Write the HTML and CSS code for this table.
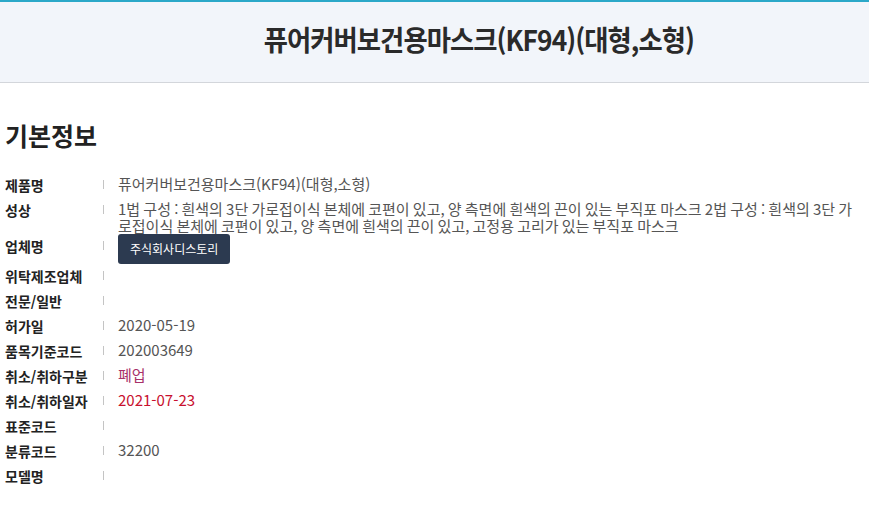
FILE: index.html
```html
<!DOCTYPE html>
<html lang="ko">
<head>
  <meta charset="UTF-8">
  <meta name="viewport" content="width=device-width, initial-scale=1.0">
  <title>퓨어커버보건용마스크(KF94)(대형,소형)</title>
  <link rel="stylesheet" href="styles.css">
</head>
<body>

  <!-- 제품 제목 -->
  <div class="title-bar">
    <h1>퓨어커버보건용마스크(KF94)(대형,소형)</h1>
  </div>

  <!-- 기본정보 -->
  <div class="info-section">
    <h2>기본정보</h2>

    <div class="info-list">
      <div class="info-row">
        <div class="label">제품명</div>
        <span class="sep"></span>
        <div class="value">퓨어커버보건용마스크(KF94)(대형,소형)</div>
      </div>
      <div class="info-row">
        <div class="label">성상</div>
        <span class="sep"></span>
        <div class="value">1법 구성 : 흰색의 3단 가로접이식 본체에 코편이 있고, 양 측면에 흰색의 끈이 있는 부직포 마스크 2법 구성 : 흰색의 3단 가로접이식 본체에 코편이 있고, 양 측면에 흰색의 끈이 있고, 고정용 고리가 있는 부직포 마스크</div>
      </div>
      <div class="info-row company-row">
        <div class="label">업체명</div>
        <span class="sep"></span>
        <div class="value"><span class="company-badge">주식회사디스토리</span></div>
      </div>
      <div class="info-row">
        <div class="label">위탁제조업체</div>
        <span class="sep"></span>
        <div class="value"></div>
      </div>
      <div class="info-row">
        <div class="label">전문/일반</div>
        <span class="sep"></span>
        <div class="value"></div>
      </div>
      <div class="info-row">
        <div class="label">허가일</div>
        <span class="sep"></span>
        <div class="value">2020-05-19</div>
      </div>
      <div class="info-row">
        <div class="label">품목기준코드</div>
        <span class="sep"></span>
        <div class="value">202003649</div>
      </div>
      <div class="info-row">
        <div class="label">취소/취하구분</div>
        <span class="sep"></span>
        <div class="value status-closed">폐업</div>
      </div>
      <div class="info-row">
        <div class="label">취소/취하일자</div>
        <span class="sep"></span>
        <div class="value status-date">2021-07-23</div>
      </div>
      <div class="info-row">
        <div class="label">표준코드</div>
        <span class="sep"></span>
        <div class="value"></div>
      </div>
      <div class="info-row">
        <div class="label">분류코드</div>
        <span class="sep"></span>
        <div class="value">32200</div>
      </div>
      <div class="info-row">
        <div class="label">모델명</div>
        <span class="sep"></span>
        <div class="value"></div>
      </div>
    </div>
  </div>

</body>
</html>
```

FILE: styles.css
```css
/* ===== General ===== */
body {
  font-family: 'Noto Sans CJK KR', 'Noto Sans', sans-serif;
  margin: 0;
  padding: 0;
  background-color: #ffffff;
  color: #222;
}

/* ===== Title Bar ===== */
.title-bar {
  background-color: #f2f5fa;
  border-top: 2px solid #2ba8c8;
  border-bottom: 1px solid #d3d6db;
  height: 80px;
  display: flex;
  align-items: center;
  justify-content: center;
  padding-left: 88px;
}

.title-bar h1 {
  display: inline-block;
  margin: 0 0 7px;
  font-size: 28px;
  font-weight: 700;
  letter-spacing: -1px;
  color: #2a2a2a;
  transform: scaleX(0.94);
}

/* ===== Basic Info ===== */
.info-section {
  padding: 0 5px;
}

.info-section h2 {
  margin: 30px 0 0;
  font-size: 25px;
  font-weight: 700;
  line-height: 44px;
  color: #222;
}

.info-list {
  margin-top: 16px;
}

.info-row {
  display: flex;
  min-height: 25px;
}

.info-row .label {
  width: 98px;
  flex-shrink: 0;
  font-size: 14px;
  font-weight: 700;
  line-height: 25px;
  color: #222;
}

.info-row .sep {
  width: 1px;
  height: 9px;
  margin-top: 7px;
  background-color: #c4c4c4;
  flex-shrink: 0;
}

.info-row .value {
  flex: 1;
  margin-left: 14px;
  padding-top: 2px;
  font-size: 15px;
  line-height: 17px;
  word-spacing: -1px;
  color: #555;
  padding-right: 4px;
}

.company-row {
  min-height: 30px;
}

.company-row .value {
  padding-top: 0;
}

.company-badge {
  display: inline-block;
  background-color: #2c3a50;
  color: #fff;
  font-size: 12px;
  line-height: 30px;
  padding: 0 12px;
  border-radius: 3px;
}

.status-closed {
  color: #a8316a !important;
}

.status-date {
  color: #c8102e !important;
}
```
